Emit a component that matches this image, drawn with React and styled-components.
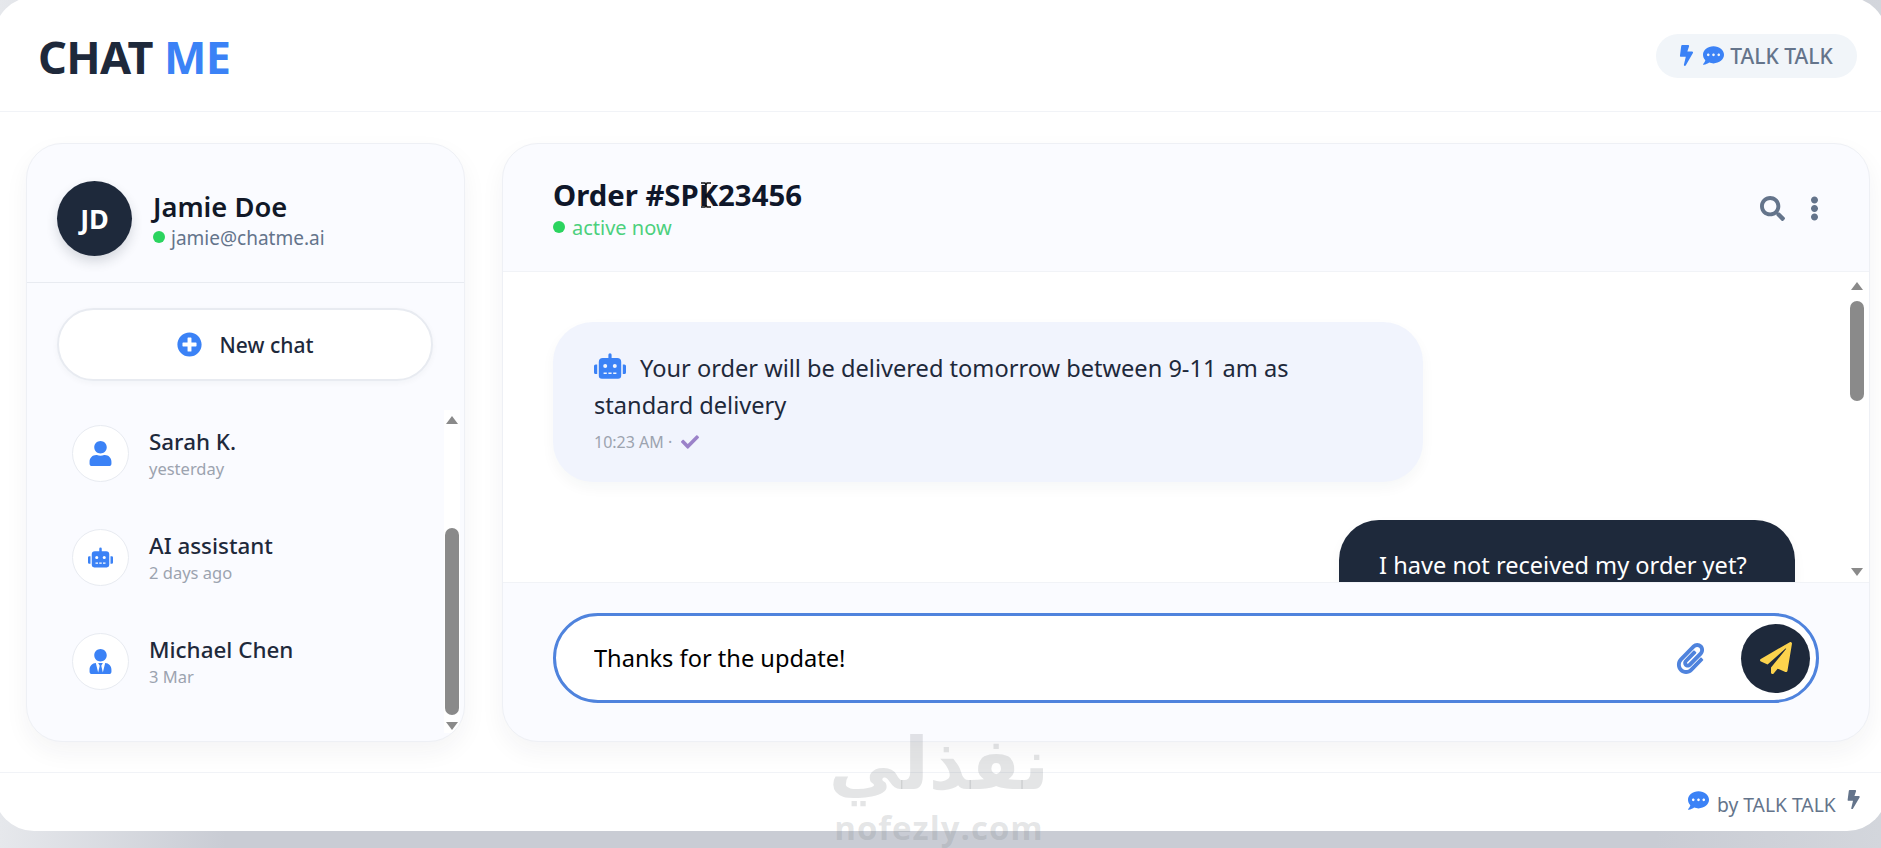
import React from 'react';
import styled, { createGlobalStyle } from 'styled-components';
import {
  FaBolt, FaCommentDots, FaSearch, FaEllipsisV, FaRobot, FaCheck, FaPlusCircle,
  FaUser, FaUserTie, FaPaperclip, FaPaperPlane,
} from 'react-icons/fa';

const GlobalStyle = createGlobalStyle`
  html, body {
    margin: 0;
    height: 100%;
    overflow: hidden;
    background: linear-gradient(90deg, #e6e8ec 0%, #c9ccd4 12%, #c9ccd4 88%, #d3d6dc 100%);
    font-family: "Noto Sans", "Open Sans", "Liberation Sans", sans-serif;
    color: #1e293b;
  }
  * { box-sizing: border-box; }
`;

const Card = styled.div`
  position: relative;
  width: 1893px;
  height: 834px;
  margin: -3px -6px 0;
  background: #fff;
  border-radius: 40px;
  display: flex;
  flex-direction: column;
`;

const Header = styled.header`
  height: 115px;
  padding: 5px 30px 0 44px;
  display: flex;
  align-items: center;
  justify-content: space-between;
  border-bottom: 1px solid #f1f3f7;
`;

const Logo = styled.h1`
  margin: 0;
  font-size: 45px;
  font-weight: 700;
  letter-spacing: -0.6px;
  color: #1e293b;
  span { color: #3b82f6; }
`;

const Badge = styled.div`
  width: 201px;
  height: 44px;
  margin-top: -2px;
  padding-right: 4px;
  border-radius: 22px;
  background: #f1f5f9;
  display: flex;
  align-items: center;
  justify-content: center;
  gap: 6px;
  font-size: 21px;
  font-weight: 500;
  color: #64748b;
`;

const Body = styled.main`
  height: 661px;
  padding: 31px 17px 0 32px;
  display: flex;
  gap: 37px;
  border-bottom: 1px solid #f1f3f7;
`;

const Panel = styled.section`
  height: 599px;
  background: #fafbff;
  border: 1px solid #eef0f5;
  border-radius: 36px;
  box-shadow: 0 10px 25px rgba(30, 41, 59, 0.05);
  display: flex;
  flex-direction: column;
  overflow: hidden;
`;

const Sidebar = styled(Panel)`
  width: 439px;
  flex-shrink: 0;
`;

const Main = styled(Panel)`
  flex: 1;
`;

const Profile = styled.div`
  height: 139px;
  padding: 12px 0 0 30px;
  display: flex;
  align-items: center;
  gap: 21px;
  border-bottom: 1px solid #e8ebf1;
`;

const Avatar = styled.div`
  width: 75px;
  height: 75px;
  margin-top: -1px;
  border-radius: 50%;
  background: #1e293b;
  color: #fff;
  font-size: 27px;
  font-weight: 700;
  display: flex;
  align-items: center;
  justify-content: center;
  box-shadow: 0 6px 12px rgba(30, 41, 59, 0.16);
`;

const ProfileInfo = styled.div`
  padding-top: 6px;
`;

const ProfileName = styled.div`
  font-size: 27.3px;
  font-weight: 600;
  line-height: 32px;
  color: #111827;
`;

const Dot = styled.span`
  display: inline-block;
  width: 12px;
  height: 12px;
  border-radius: 50%;
  background: #2bd45f;
  margin-right: ${p => p.$gap || 6}px;
  position: relative;
  top: -2px;
`;

const Email = styled.div`
  font-size: 19px;
  line-height: 30px;
  color: #64748b;
`;

const NewChat = styled.button`
  width: 376px;
  height: 73px;
  margin: 25px 0 0 30px;
  flex-shrink: 0;
  border: 2px solid #e8ebf1;
  border-radius: 37px;
  background: #fff;
  box-shadow: 0 2px 6px rgba(30, 41, 59, 0.04);
  font: 500 21px "Noto Sans", sans-serif;
  color: #1e293b;
  display: flex;
  align-items: center;
  justify-content: center;
  gap: 18px;
  svg { color: #3b82f6; font-size: 25px; }
`;

const ListWrap = styled.div`
  flex: 1;
  display: flex;
  min-height: 0;
  padding: 29px 4px 8px 0;
`;

const ChatList = styled.div`
  flex: 1;
  padding: 15px 0 0 45px;
  display: flex;
  flex-direction: column;
  gap: 47px;
`;

const ChatRow = styled.div`
  display: flex;
  align-items: center;
  gap: 20px;
`;

const ChatIcon = styled.div`
  width: 57px;
  height: 57px;
  border-radius: 50%;
  background: #fff;
  border: 1px solid #e8ebf1;
  color: #3b82f6;
  font-size: 25px;
  display: flex;
  align-items: center;
  justify-content: center;
`;

const ChatName = styled.div`
  font-size: 22.4px;
  font-weight: 500;
  line-height: 30px;
  color: #1e293b;
`;

const ChatTime = styled.div`
  font-size: 16.5px;
  line-height: 24px;
  color: #9ca3af;
`;

const Scrollbar = styled.div`
  width: 16px;
  flex-shrink: 0;
  display: flex;
  flex-direction: column;
  align-items: center;
  background: #fff;
`;

const Arrow = styled.div`
  width: 0;
  height: 0;
  flex-shrink: 0;
  margin: ${p => p.$margin};
  border-left: 6px solid transparent;
  border-right: 6px solid transparent;
  ${p => (p.$down ? 'border-top: 8px solid #8a8a8a;' : 'border-bottom: 8px solid #8a8a8a;')}
`;

const Thumb = styled.div`
  width: 14px;
  flex-shrink: 0;
  height: ${p => p.$height}px;
  margin-top: ${p => p.$offset}px;
  background: #8a8a8a;
  border-radius: 7px;
`;

const Spacer = styled.div`
  flex: 1;
`;

const MainHeader = styled.div`
  height: 128px;
  flex-shrink: 0;
  padding: 2px 42px 0 50px;
  display: flex;
  align-items: center;
  justify-content: space-between;
  border-bottom: 1px solid #f1f3f7;
`;

const Title = styled.h2`
  margin: 0;
  font-size: 29.3px;
  font-weight: 700;
  line-height: 38px;
  color: #0f172a;
`;

const Status = styled.div`
  font-size: 20px;
  line-height: 27px;
  color: #4cd07d;
`;

const Tools = styled.div`
  display: flex;
  align-items: center;
  gap: 17px;
  color: #64748b;
  font-size: 25px;
`;

const Messages = styled.div`
  flex: 1;
  min-height: 0;
  padding-right: 4px;
  display: flex;
  background: #fff;
  overflow: hidden;
`;

const MessageList = styled.div`
  flex: 1;
  padding: 50px 54px 0 50px;
  display: flex;
  flex-direction: column;
  gap: 38px;
  overflow: hidden;
`;

const Bubble = styled.div`
  flex-shrink: 0;
  align-self: ${p => (p.$mine ? 'flex-end' : 'flex-start')};
  width: ${p => (p.$mine ? '456px' : '870px')};
  padding: ${p => (p.$mine ? '27px 40px' : '28px 100px 0 41px')};
  height: ${p => (p.$mine ? '120px' : '160px')};
  border-radius: 40px;
  background: ${p => (p.$mine ? '#1e293b' : '#f1f4fd')};
  color: ${p => (p.$mine ? '#fff' : '#1e293b')};
  box-shadow: 0 6px 14px rgba(30, 41, 59, 0.04);
  font-size: 23.6px;
  line-height: 37px;
`;

const BotIcon = styled(FaRobot)`
  color: #3b82f6;
  font-size: 32px;
  margin-right: 14px;
  vertical-align: -5px;
`;

const Meta = styled.div`
  font-size: 16px;
  line-height: 24px;
  margin-top: 6px;
  color: #9ca3af;
  svg { color: #9b82c9; margin-left: 5px; font-size: 18px; vertical-align: -3px; }
`;

const InputArea = styled.div`
  height: 159px;
  flex-shrink: 0;
  padding: 30px 50px 0;
  border-top: 1px solid #f1f3f7;
`;

const InputPill = styled.div`
  height: 90px;
  border: 3px solid #4f83dd;
  border-radius: 45px;
  background: #fff;
  padding: 0 6px 0 36px;
  display: flex;
  align-items: center;
`;

const TextInput = styled.input`
  flex: 1;
  border: none;
  outline: none;
  background: none;
  font: 23.6px "Noto Sans", sans-serif;
  color: #000;
`;

const Clip = styled(FaPaperclip)`
  color: #4f83dd;
  font-size: 31px;
  margin-right: 35px;
`;

const SendButton = styled.button`
  width: 69px;
  height: 69px;
  border: none;
  border-radius: 50%;
  background: #1e293b;
  color: #fcd34d;
  font-size: 32px;
  display: flex;
  align-items: center;
  justify-content: center;
`;

const Footer = styled.footer`
  flex: 1;
  padding: 17px 24px 0 0;
  display: flex;
  justify-content: flex-end;
  align-items: flex-start;
  gap: 8px;
  font-size: 19.3px;
  color: #64748b;
`;

const FooterText = styled.span`
  position: relative;
  top: 1px;
`;

const FooterChat = styled(FaCommentDots)`
  color: #3b82f6;
  font-size: 21px;
`;

const Watermark = styled.div`
  position: absolute;
  left: 832px;
  top: 722px;
  width: 226px;
  text-align: center;
  color: rgba(120, 125, 130, 0.2);
  pointer-events: none;
`;

const WatermarkArabic = styled.div`
  font: 700 72px/90px "DejaVu Sans", sans-serif;
  direction: rtl;
`;

const WatermarkLatin = styled.div`
  font: 700 33px/38px "Open Sans", sans-serif;
  letter-spacing: 1px;
`;

const Cursor = styled.svg`
  position: absolute;
  left: 705px;
  top: 185px;
`;

const chats = [
  { name: 'Sarah K.', time: 'yesterday', icon: <FaUser /> },
  { name: 'AI assistant', time: '2 days ago', icon: <FaRobot /> },
  { name: 'Michael Chen', time: '3 Mar', icon: <FaUserTie /> },
];

const App = () => (
  <>
    <GlobalStyle />
    <Card>
      <Header>
        <Logo>CHAT <span>ME</span></Logo>
        <Badge>
          <FaBolt color="#3b82f6" />
          <FaCommentDots color="#3b82f6" size={21} />
          TALK TALK
        </Badge>
      </Header>
      <Body>
        <Sidebar>
          <Profile>
            <Avatar>JD</Avatar>
            <ProfileInfo>
              <ProfileName>Jamie Doe</ProfileName>
              <Email><Dot />jamie@chatme.ai</Email>
            </ProfileInfo>
          </Profile>
          <NewChat><FaPlusCircle />New chat</NewChat>
          <ListWrap>
            <ChatList>
              {chats.map(chat => (
                <ChatRow key={chat.name}>
                  <ChatIcon>{chat.icon}</ChatIcon>
                  <div>
                    <ChatName>{chat.name}</ChatName>
                    <ChatTime>{chat.time}</ChatTime>
                  </div>
                </ChatRow>
              ))}
            </ChatList>
            <Scrollbar>
              <Arrow $margin="6px 0 0" />
              <Thumb $height={187} $offset={104} />
              <Arrow $down $margin="7px 0 0" />
            </Scrollbar>
          </ListWrap>
        </Sidebar>
        <Main>
          <MainHeader>
            <div>
              <Title>Order #SPK23456</Title>
              <Status><Dot $gap={7} />active now</Status>
            </div>
            <Tools>
              <FaSearch />
              <FaEllipsisV />
            </Tools>
          </MainHeader>
          <Messages>
            <MessageList>
              <Bubble>
                <BotIcon />
                Your order will be delivered tomorrow between 9-11 am as standard delivery
                <Meta>10:23 AM · <FaCheck /></Meta>
              </Bubble>
              <Bubble $mine>I have not received my order yet?</Bubble>
            </MessageList>
            <Scrollbar>
              <Arrow $margin="10px 0 0" />
              <Thumb $height={100} $offset={11} />
              <Spacer />
              <Arrow $down $margin="0 0 6px" />
            </Scrollbar>
          </Messages>
          <InputArea>
            <InputPill>
              <TextInput defaultValue="Thanks for the update!" />
              <Clip />
              <SendButton><FaPaperPlane /></SendButton>
            </InputPill>
          </InputArea>
        </Main>
      </Body>
      <Footer>
        <FooterChat />
        <FooterText>by TALK TALK</FooterText>
        <FaBolt color="#64748b" />
      </Footer>
      <Watermark>
        <WatermarkArabic>نفذلي</WatermarkArabic>
        <WatermarkLatin>nofezly.com</WatermarkLatin>
      </Watermark>
      <Cursor width="14" height="26" viewBox="0 0 14 26" fill="none" stroke="#111" strokeWidth="1.5">
        <path d="M2 1h4l1 2 1-2h4M7 3v20M2 25h4l1-2 1 2h4" />
      </Cursor>
    </Card>
  </>
);

export default App;
